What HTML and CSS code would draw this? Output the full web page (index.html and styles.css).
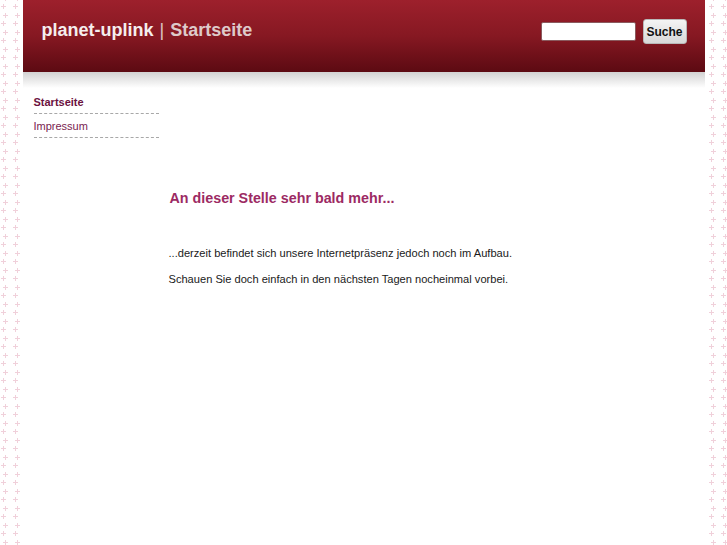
FILE: index.html
```html
<!DOCTYPE html>
<html lang="de">
<head>
<meta charset="utf-8">
<title>planet-uplink | Startseite</title>
<link rel="stylesheet" href="styles.css">
</head>
<body>
<div class="page">
  <header class="header">
    <h1 class="title"><span class="site">planet-uplink</span><span class="sep"> | </span><span class="section">Startseite</span></h1>
    <form class="search">
      <input class="search-input" type="text">
      <button class="search-btn" type="button">Suche</button>
    </form>
  </header>
  <div class="shadow"></div>
  <div class="body">
    <nav class="nav">
      <a class="nav-item active" href="#">Startseite</a>
      <a class="nav-item" href="#">Impressum</a>
    </nav>
    <main class="content">
      <h2 class="heading">An dieser Stelle sehr bald mehr...</h2>
      <p class="text first">...derzeit befindet sich unsere Internetpräsenz jedoch noch im Aufbau.</p>
      <p class="text">Schauen Sie doch einfach in den nächsten Tagen nocheinmal vorbei.</p>
    </main>
  </div>
</div>
</body>
</html>
```
FILE: styles.css
```css
html, body {
  margin: 0;
  padding: 0;
  height: 100%;
}
body {
  font-family: "Liberation Sans", Arial, sans-serif;
  background-color: #ffffff;
  background-image: url("data:image/svg+xml;utf8,<svg xmlns='http://www.w3.org/2000/svg' width='12' height='17'><g fill='%23f0d0da'><rect x='1' y='6' width='5' height='1'/><rect x='3' y='4' width='1' height='5'/><rect x='3' y='15' width='5' height='1'/><rect x='5' y='13' width='1' height='5'/><rect x='5' y='-4' width='1' height='5'/></g></svg>");
  background-repeat: repeat;
  background-position: 0 0;
}
.page {
  width: 682px;
  margin: 0 auto;
  min-height: 100%;
  background: #ffffff;
}
.header {
  height: 72px;
  box-sizing: border-box;
  background: linear-gradient(to bottom, #9d202c 0%, #861822 50%, #5c0a12 100%);
  display: flex;
  justify-content: space-between;
  align-items: flex-start;
  padding: 19px 18px 0 19px;
}
.title {
  margin: 0;
  font-size: 18px;
  line-height: 22px;
  font-weight: bold;
}
.site {
  color: #f5eeee;
}
.sep {
  color: #dcc6c6;
  font-weight: normal;
  white-space: pre;
  padding: 0 1px;
}
.section {
  color: #decaca;
}
.search {
  display: flex;
  align-items: center;
  gap: 7px;
  margin: 0;
  padding-top: 0;
}
.search-input {
  width: 95px;
  height: 19px;
  box-sizing: border-box;
  border: 1px solid #8a5a5e;
  border-radius: 2px;
  background: #ffffff;
  padding: 0 3px;
  margin: 0;
}
.search-btn {
  width: 44px;
  height: 25px;
  box-sizing: border-box;
  border: 1px solid #b8b8b8;
  border-radius: 3px;
  background: linear-gradient(to bottom, #f4f4f4, #d8d8d8);
  font-family: "Liberation Sans", Arial, sans-serif;
  font-weight: bold;
  font-size: 12px;
  color: #111;
  padding: 0;
  margin: 0;
}
.shadow {
  height: 16px;
  background: linear-gradient(to bottom, #d2d2d2, #ffffff);
}
.body {
  display: flex;
  gap: 10px;
  padding-left: 11px;
}
.nav {
  width: 125px;
  display: flex;
  flex-direction: column;
  padding-top: 2px;
}
.nav-item {
  display: block;
  font-size: 11px;
  line-height: 14px;
  padding: 5px 0 4px;
  border-bottom: 1px dashed #a8a8a8;
  text-decoration: none;
  color: #7a2450;
}
.nav-item.active {
  font-weight: bold;
  color: #6b1140;
}
.content {
  flex: 1;
  padding-top: 102px;
}
.heading {
  margin: 0 0 39px 1px;
  font-size: 14.3px;
  line-height: 17px;
  font-weight: bold;
  color: #9c2a63;
}
.text {
  margin: 0 0 12px;
  font-size: 11.1px;
  line-height: 14px;
  color: #1a1a1a;
}
```
